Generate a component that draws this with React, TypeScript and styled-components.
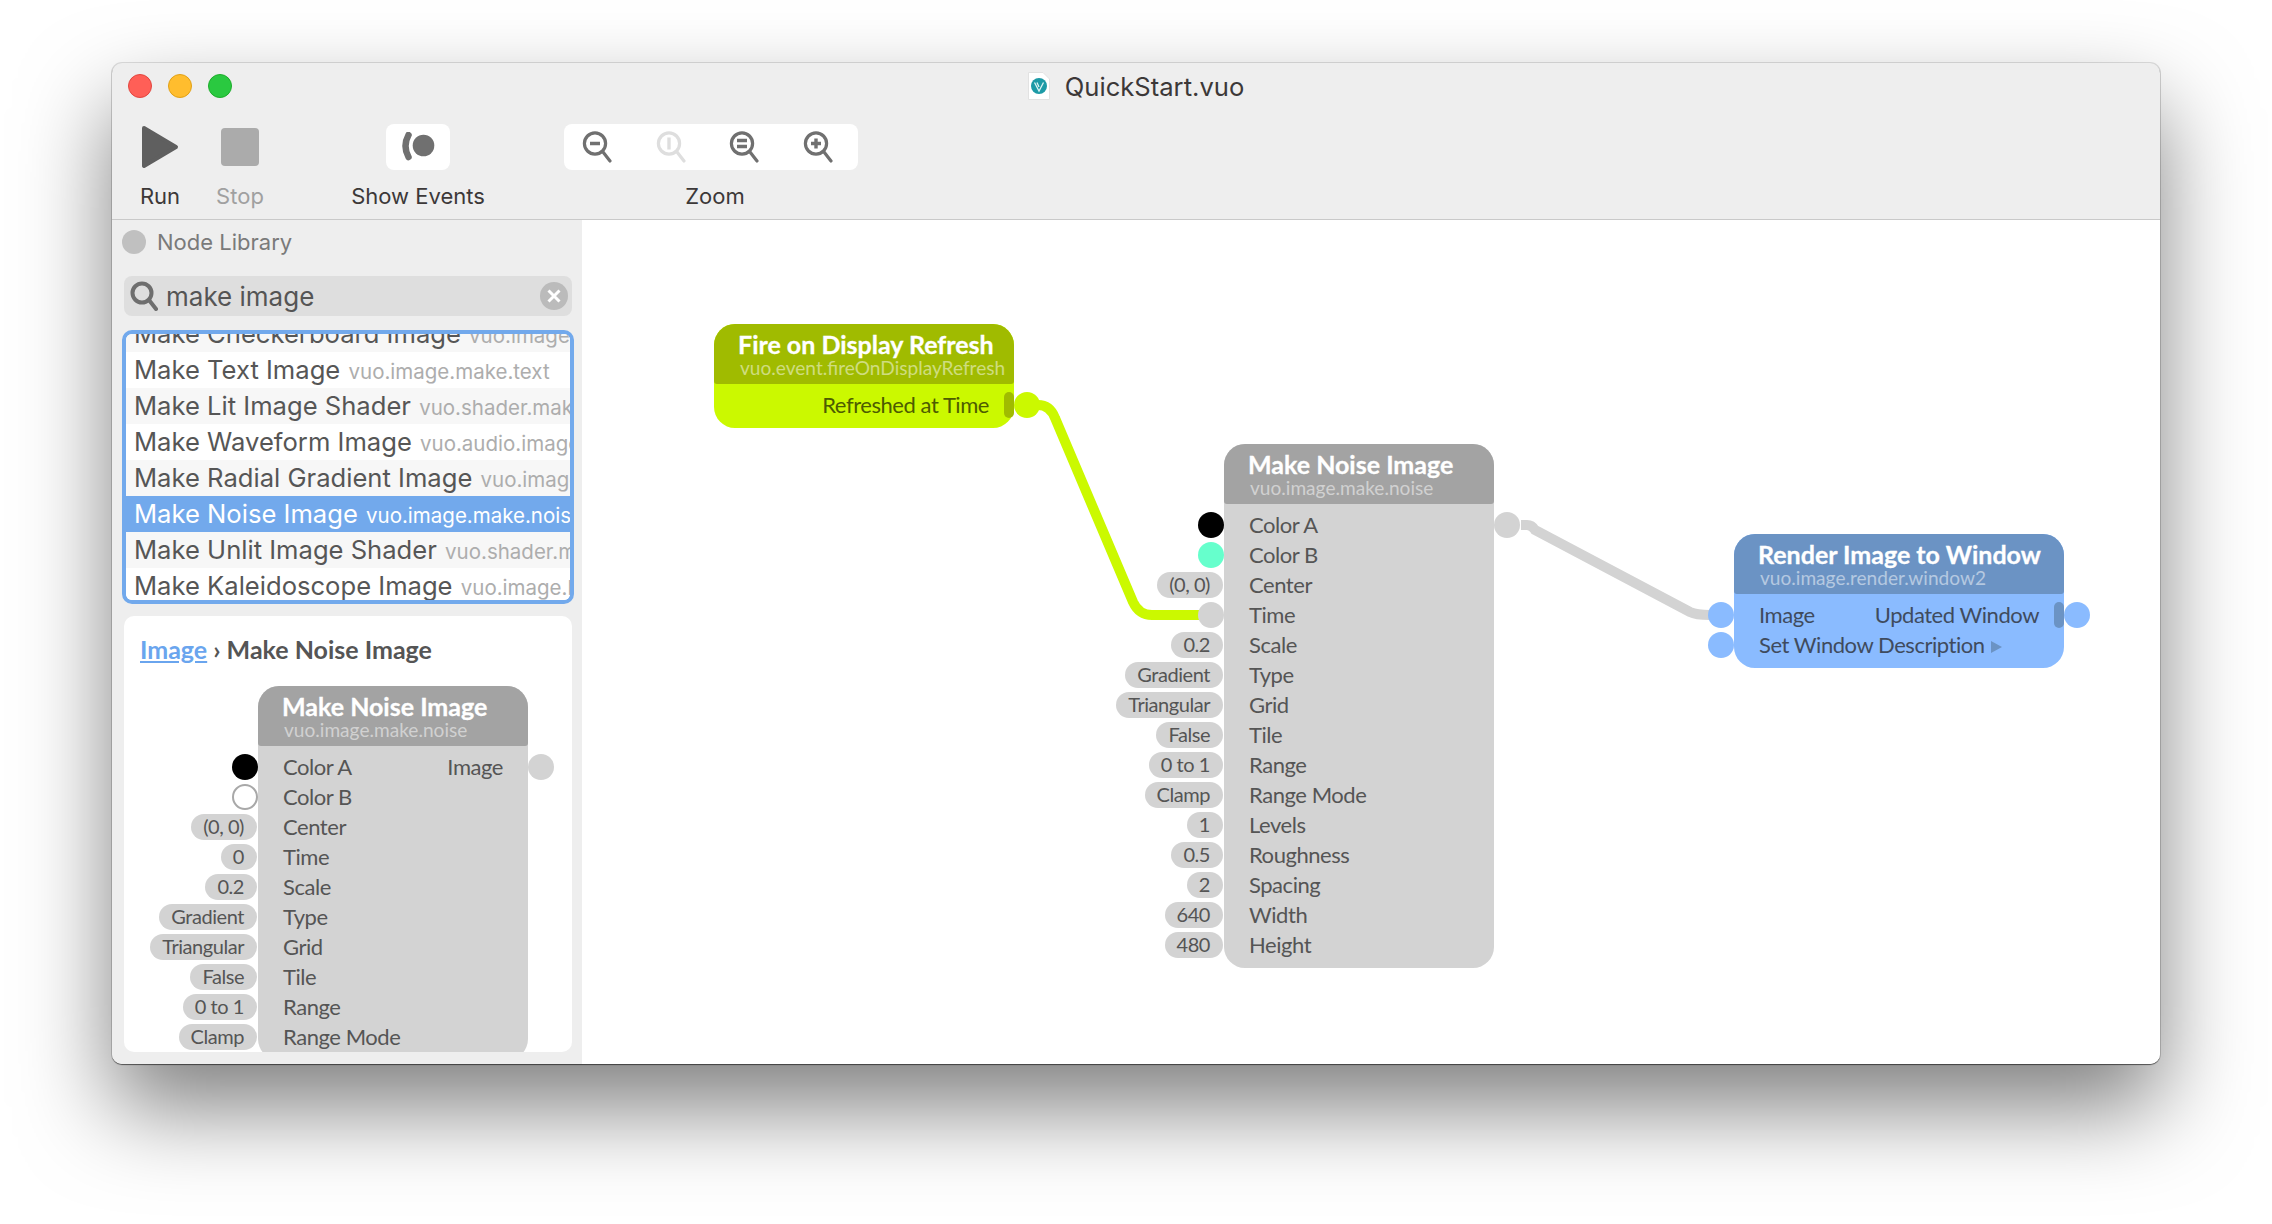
import styled, { createGlobalStyle } from 'styled-components';

type Tone = 'gray' | 'green' | 'blue';

type PortRow = {
  label?: string;
  constant?: string;
  dot?: string;
  ringed?: boolean;
  noInput?: boolean;
  output?: string;
  hasOutput?: boolean;
  eventOut?: boolean;
  arrow?: boolean;
};

const TONES: Record<Tone, { body: string; head: string; text: string }> = {
  gray: { body: '#d3d3d3', head: '#a3a3a3', text: '#555555' },
  green: { body: '#cbf900', head: '#a0bb00', text: '#4d5c00' },
  blue: { body: '#8abbff', head: '#6b93c4', text: '#3f4b5e' },
};

const NOISE_PORTS: PortRow[] = [
  { label: 'Color A', dot: '#000000', hasOutput: true },
  { label: 'Color B', dot: '#66ffcc' },
  { label: 'Center', constant: '(0, 0)' },
  { label: 'Time' },
  { label: 'Scale', constant: '0.2' },
  { label: 'Type', constant: 'Gradient' },
  { label: 'Grid', constant: 'Triangular' },
  { label: 'Tile', constant: 'False' },
  { label: 'Range', constant: '0 to 1' },
  { label: 'Range Mode', constant: 'Clamp' },
  { label: 'Levels', constant: '1' },
  { label: 'Roughness', constant: '0.5' },
  { label: 'Spacing', constant: '2' },
  { label: 'Width', constant: '640' },
  { label: 'Height', constant: '480' },
];

const PREVIEW_PORTS: PortRow[] = [
  { label: 'Color A', dot: '#000000', output: 'Image', hasOutput: true },
  { label: 'Color B', dot: '#ffffff', ringed: true },
  { label: 'Center', constant: '(0, 0)' },
  { label: 'Time', constant: '0' },
  { label: 'Scale', constant: '0.2' },
  { label: 'Type', constant: 'Gradient' },
  { label: 'Grid', constant: 'Triangular' },
  { label: 'Tile', constant: 'False' },
  { label: 'Range', constant: '0 to 1' },
  { label: 'Range Mode', constant: 'Clamp' },
];

const RESULTS = [
  { name: 'Make Checkerboard Image', id: 'vuo.image.make.checkerboard' },
  { name: 'Make Text Image', id: 'vuo.image.make.text' },
  { name: 'Make Lit Image Shader', id: 'vuo.shader.make.image' },
  { name: 'Make Waveform Image', id: 'vuo.audio.image.waveform' },
  { name: 'Make Radial Gradient Image', id: 'vuo.image.make.gradient' },
  { name: 'Make Noise Image', id: 'vuo.image.make.noise', selected: true },
  { name: 'Make Unlit Image Shader', id: 'vuo.shader.make.unlit' },
  { name: 'Make Kaleidoscope Image', id: 'vuo.image.kaleidoscope' },
];

const Node = ({ tone, title, id, rows, className }: { tone: Tone; title: string; id: string; rows: PortRow[]; className?: string }) => (
  <NodeBox $tone={tone} className={className}>
    <NodeHeader $tone={tone}>
      <NodeTitle>{title}</NodeTitle>
      <NodeClass>{id}</NodeClass>
    </NodeHeader>
    <PortList>
      {rows.map((row) => (
        <Row key={row.label ?? row.output}>
          {row.constant && <Constant>{row.constant}</Constant>}
          {!row.constant && !row.noInput && <InPort $tone={tone} $color={row.dot} $ringed={row.ringed} />}
          <PortName>
            {row.label}
            {row.arrow && <Arrow />}
          </PortName>
          {row.output && <PortName>{row.output}</PortName>}
          {row.eventOut && <EventMark $tone={tone} />}
          {(row.hasOutput || row.eventOut) && <OutPort $tone={tone} />}
        </Row>
      ))}
    </PortList>
  </NodeBox>
);

const ZoomIcon = ({ mark, off }: { mark: string; off?: boolean }) => (
  <svg width="37" height="32" viewBox="0 0 37 32" fill="none" stroke={off ? '#dedede' : '#707070'} strokeWidth="3.2">
    <circle cx="13" cy="12.5" r="10.6" />
    <path d="M21 21 L28 30" strokeLinecap="round" />
    <path d={mark} strokeWidth="3.4" />
  </svg>
);

export default function App() {
  return (
    <>
      <GlobalStyle />
      <Window>
        <TitleBar>
          <Lights>
            <Light $color="#ff5f57" $edge="#e2463f" />
            <Light $color="#ffbd2e" $edge="#e1a116" />
            <Light $color="#2ac940" $edge="#1dad2b" />
          </Lights>
          <Title>
            <svg width="22" height="28" viewBox="0 0 22 28">
              <path d="M0.5 0.5 H15 L21.5 7 V27.5 H0.5 Z" fill="#ffffff" stroke="#e2e2e2" />
              <circle cx="11" cy="14" r="8" fill="#1c9aa6" />
              <path d="M6.5 10.5 L11 19 L15.5 10.5 M9 10.5 L11 15" fill="none" stroke="#d8f2f2" strokeWidth="1.3" />
            </svg>
            QuickStart.vuo
          </Title>
          <span />
        </TitleBar>
        <Toolbar>
          <ToolItem $width={80}>
            <IconSlot>
              <svg width="38" height="44" viewBox="0 0 38 44">
                <path d="M3 3 L35 22 L3 41 Z" fill="#5f5f5f" stroke="#5f5f5f" strokeWidth="4" strokeLinejoin="round" />
              </svg>
            </IconSlot>
            <ToolLabel>Run</ToolLabel>
          </ToolItem>
          <ToolItem $width={80}>
            <IconSlot>
              <StopSquare />
            </IconSlot>
            <ToolLabel $off>Stop</ToolLabel>
          </ToolItem>
          <ToolItem $width={134} $gap={71}>
            <IconChip $width={64}>
              <svg width="34" height="30" viewBox="0 0 34 30" fill="none">
                <path d="M7.5 3 Q1.5 14 7.5 25" stroke="#707070" strokeWidth="6.5" strokeLinecap="round" />
                <circle cx="22.5" cy="13.5" r="10.8" fill="#707070" />
              </svg>
            </IconChip>
            <ToolLabel>Show Events</ToolLabel>
          </ToolItem>
          <ToolItem $width={294} $gap={79}>
            <IconChip $width={294}>
              <ZoomIcon mark="M8 12.5 H18" />
              <ZoomIcon mark="M13 6.5 V18.5" off />
              <ZoomIcon mark="M8 9.5 H18 M8 15.5 H18" />
              <ZoomIcon mark="M8 12.5 H18 M13 7.5 V17.5" />
            </IconChip>
            <ToolLabel $shift={8}>Zoom</ToolLabel>
          </ToolItem>
        </Toolbar>
        <Main>
          <Sidebar>
            <LibraryHead>
              <LibraryDot />
              Node Library
            </LibraryHead>
            <SearchBox>
              <svg width="28" height="30" viewBox="0 0 28 30" fill="none" stroke="#6e6e6e" strokeWidth="4">
                <circle cx="12" cy="12" r="9.5" />
                <path d="M19 19 L26 28" strokeLinecap="round" />
              </svg>
              <SearchText>make image</SearchText>
              <ClearButton>
                <svg width="14" height="14" viewBox="0 0 14 14" stroke="#ffffff" strokeWidth="3">
                  <path d="M1.5 1.5 L12.5 12.5 M12.5 1.5 L1.5 12.5" />
                </svg>
              </ClearButton>
            </SearchBox>
            <ResultList>
              <ResultScroll>
                {RESULTS.map((item, i) => (
                  <Result key={item.name} $odd={i % 2 === 0} $selected={item.selected}>
                    {item.name} <ResultId $selected={item.selected}>{item.id}</ResultId>
                  </Result>
                ))}
              </ResultScroll>
            </ResultList>
            <InfoPanel>
              <Crumbs>
                <CrumbLink>Image</CrumbLink> › Make Noise Image
              </Crumbs>
              <PreviewNode tone="gray" title="Make Noise Image" id="vuo.image.make.noise" rows={PREVIEW_PORTS} />
            </InfoPanel>
          </Sidebar>
          <Canvas>
            <Cables width="1578" height="844" viewBox="0 0 1578 844" fill="none" strokeWidth="10">
              <path d="M445 185 H456 Q468 185 473 198 L551 382 Q557 395 570 395 H618" stroke="#cbf900" />
              <path d="M939 305 H945 Q950 305 953 310 L1108 392 Q1114 395 1128 395" stroke="#d3d3d3" />
            </Cables>
            <PlacedNode
              $x={132}
              $y={104}
              $width={300}
              tone="green"
              title="Fire on Display Refresh"
              id="vuo.event.fireOnDisplayRefresh"
              rows={[{ output: 'Refreshed at Time', noInput: true, eventOut: true }]}
            />
            <PlacedNode
              $x={642}
              $y={224}
              $width={270}
              tone="gray"
              title="Make Noise Image"
              id="vuo.image.make.noise"
              rows={NOISE_PORTS}
            />
            <PlacedNode
              $x={1152}
              $y={314}
              $width={330}
              tone="blue"
              title="Render Image to Window"
              id="vuo.image.render.window2"
              rows={[
                { label: 'Image', output: 'Updated Window', eventOut: true },
                { label: 'Set Window Description', arrow: true },
              ]}
            />
          </Canvas>
        </Main>
      </Window>
    </>
  );
}

const GlobalStyle = createGlobalStyle`
  html, body {
    margin: 0;
    height: 100%;
    background: #ffffff;
  }
  html {
    overflow: hidden;
  }
  body {
    font-family: Inter, "Liberation Sans", sans-serif;
    padding-top: 63px;
    box-sizing: border-box;
  }
`;

const Window = styled.div`
  width: 2048px;
  height: 1001px;
  margin-left: 112px;
  display: flex;
  flex-direction: column;
  background: #eeeeee;
  border-radius: 10px;
  overflow: hidden;
  box-shadow: 0 44px 90px rgba(0, 0, 0, 0.5), 0 0 0 1px rgba(0, 0, 0, 0.12), 0 1px 1px rgba(0, 0, 0, 0.5);
`;

const TitleBar = styled.div`
  height: 46px;
  display: grid;
  grid-template-columns: 1fr auto 1fr;
  align-items: center;
`;

const Lights = styled.div`
  display: flex;
  gap: 16px;
  padding-left: 16px;
`;

const Light = styled.div<{ $color: string; $edge: string }>`
  width: 24px;
  height: 24px;
  box-sizing: border-box;
  border-radius: 50%;
  background: ${(p) => p.$color};
  border: 1px solid ${(p) => p.$edge};
`;

const Title = styled.div`
  display: flex;
  align-items: center;
  gap: 15px;
  font-size: 25.6px;
  color: #3c3838;
`;

const Toolbar = styled.div`
  height: 111px;
  box-sizing: border-box;
  display: flex;
  padding: 15px 0 0 8px;
  border-bottom: 1px solid #c9c9c9;
`;

const ToolItem = styled.div<{ $width: number; $gap?: number }>`
  width: ${(p) => p.$width}px;
  margin-left: ${(p) => p.$gap ?? 0}px;
  display: flex;
  flex-direction: column;
  align-items: center;
`;

const IconSlot = styled.div`
  height: 46px;
  display: flex;
  align-items: center;
  justify-content: center;
`;

const StopSquare = styled.div`
  width: 38px;
  height: 38px;
  border-radius: 4px;
  background: #ababab;
`;

const IconChip = styled.div<{ $width: number }>`
  width: ${(p) => p.$width}px;
  height: 46px;
  display: flex;
  align-items: center;
  justify-content: space-around;
  background: #ffffff;
  border-radius: 8px;
  flex-shrink: 0;
`;

const ToolLabel = styled.div<{ $off?: boolean; $shift?: number }>`
  margin-top: 14px;
  margin-left: ${(p) => p.$shift ?? 0}px;
  font-size: 22px;
  line-height: 24px;
  white-space: nowrap;
  color: ${(p) => (p.$off ? '#a0a0a0' : '#3c3838')};
`;

const Main = styled.div`
  flex: 1;
  display: flex;
  min-height: 0;
`;

const Sidebar = styled.div`
  width: 470px;
  flex-shrink: 0;
  display: flex;
  flex-direction: column;
  background: #eeeeee;
`;

const LibraryHead = styled.div`
  height: 44px;
  margin-bottom: 12px;
  display: flex;
  align-items: center;
  gap: 11px;
  padding-left: 10px;
  font-size: 22px;
  color: #7a7a7a;
`;

const LibraryDot = styled.div`
  width: 24px;
  height: 24px;
  border-radius: 50%;
  background: #c0c0c0;
`;

const SearchBox = styled.div`
  height: 40px;
  margin: 0 10px 0 12px;
  padding: 0 6px;
  display: flex;
  align-items: center;
  gap: 8px;
  background: #dedede;
  border-radius: 8px;
`;

const SearchText = styled.div`
  flex: 1;
  font-size: 26px;
  color: #555555;
`;

const ClearButton = styled.div`
  width: 28px;
  height: 28px;
  margin-right: -2px;
  border-radius: 50%;
  background: #bbbbbb;
  display: flex;
  align-items: center;
  justify-content: center;
`;

const ResultList = styled.div`
  height: 274px;
  box-sizing: border-box;
  margin: 14px 8px 0 10px;
  border: 4px solid #72a9ec;
  border-radius: 10px;
  overflow: hidden;
  background: #ffffff;
`;

const ResultScroll = styled.div`
  margin-top: -18px;
`;

const Result = styled.div<{ $odd: boolean; $selected?: boolean }>`
  height: 36px;
  line-height: 36px;
  padding-left: 8px;
  font-size: 25.6px;
  white-space: nowrap;
  overflow: hidden;
  color: ${(p) => (p.$selected ? '#ffffff' : '#565656')};
  background: ${(p) => (p.$selected ? '#72a9ec' : p.$odd ? '#f7f7f7' : '#ffffff')};
`;

const ResultId = styled.span<{ $selected?: boolean }>`
  margin-left: 1px;
  font-size: 20.5px;
  color: ${(p) => (p.$selected ? '#ffffff' : '#adadad')};
`;

const InfoPanel = styled.div`
  height: 436px;
  margin: 12px 10px 0 12px;
  background: #ffffff;
  border-radius: 10px;
  overflow: hidden;
  font-family: Lato, "Noto Sans", sans-serif;
`;

const Crumbs = styled.div`
  margin: 16px 0 20px 16px;
  height: 34px;
  line-height: 34px;
  font-size: 25px;
  font-weight: 700;
  color: #555555;
`;

const CrumbLink = styled.span`
  color: #6aa5ee;
  text-decoration: underline;
`;

const Canvas = styled.div`
  flex: 1;
  position: relative;
  background: #ffffff;
  font-family: Lato, "Noto Sans", sans-serif;
`;

const Cables = styled.svg`
  position: absolute;
  inset: 0;
`;

const NodeBox = styled.div<{ $tone: Tone }>`
  background: ${(p) => TONES[p.$tone].body};
  color: ${(p) => TONES[p.$tone].text};
  border-radius: 21px;
`;

const PreviewNode = styled(Node)`
  width: 270px;
  margin-left: 134px;
`;

const PlacedNode = styled(Node)<{ $x: number; $y: number; $width: number }>`
  position: absolute;
  left: ${(p) => p.$x}px;
  top: ${(p) => p.$y}px;
  width: ${(p) => p.$width}px;
`;

const NodeHeader = styled.div<{ $tone: Tone }>`
  height: 60px;
  box-sizing: border-box;
  padding: 7px 0 0 24px;
  background: ${(p) => TONES[p.$tone].head};
  border-radius: 21px 21px 3px 3px;
  white-space: nowrap;
`;

const NodeTitle = styled.div`
  font-size: 25px;
  line-height: 27px;
  font-weight: 700;
  color: #ffffff;
  -webkit-text-stroke: 0.3px #ffffff;
`;

const NodeClass = styled.div`
  margin-left: 2px;
  font-size: 19.1px;
  line-height: 20px;
  color: rgba(255, 255, 255, 0.5);
`;

const PortList = styled.div`
  padding: 6px 0 8px;
`;

const Row = styled.div`
  position: relative;
  height: 30px;
  padding: 0 25px;
  display: flex;
  align-items: center;
  justify-content: space-between;
  font-size: 22px;
  letter-spacing: -0.45px;
  white-space: nowrap;
`;

const PortName = styled.span`
  margin-top: -2px;
`;

const InPort = styled.div<{ $tone: Tone; $color?: string; $ringed?: boolean }>`
  position: absolute;
  left: -26px;
  top: 2px;
  width: 26px;
  height: 26px;
  box-sizing: border-box;
  border-radius: 50%;
  background: ${(p) => p.$color ?? TONES[p.$tone].body};
  border: ${(p) => (p.$ringed ? '2px solid #a8a8a8' : 'none')};
`;

const OutPort = styled.div<{ $tone: Tone }>`
  position: absolute;
  right: -26px;
  top: 2px;
  width: 26px;
  height: 26px;
  border-radius: 50%;
  background: ${(p) => TONES[p.$tone].body};
`;

const EventMark = styled.div<{ $tone: Tone }>`
  position: absolute;
  right: 0;
  top: 2px;
  width: 10px;
  height: 26px;
  border-radius: 5px;
  background: ${(p) => TONES[p.$tone].head};
`;

const Constant = styled.div`
  position: absolute;
  right: calc(100% + 1px);
  top: 2px;
  height: 26px;
  line-height: 25px;
  padding: 0 13px 0 12px;
  border-radius: 13px;
  background: #d3d3d3;
  color: #555555;
  font-size: 20px;
`;

const Arrow = styled.span`
  display: inline-block;
  margin-left: 6px;
  border-left: 11px solid #6b93c4;
  border-top: 6px solid transparent;
  border-bottom: 6px solid transparent;
`;
